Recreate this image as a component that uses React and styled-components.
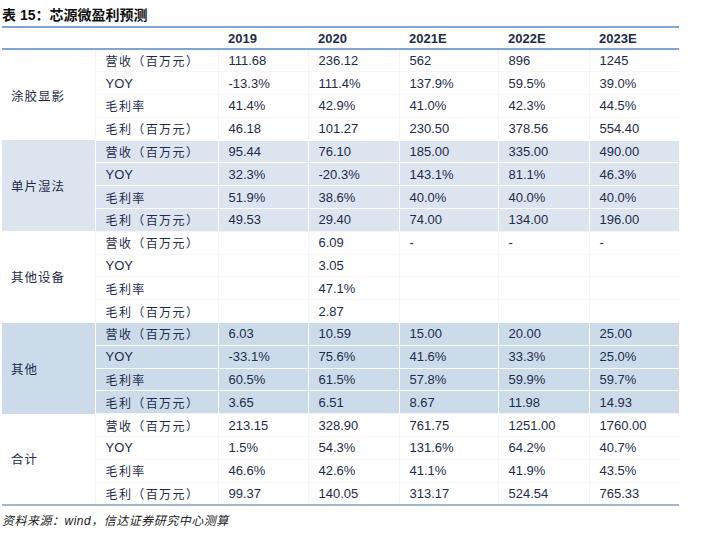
import React from "react";
import styled, { createGlobalStyle } from "styled-components";

const GlobalStyle = createGlobalStyle`
  body {
    margin: 0;
    background: #ffffff;
    font-family: "Liberation Sans", "Noto Sans CJK SC", sans-serif;
    text-spacing-trim: space-all;
  }
`;

const cols = ["2019", "2020", "2021E", "2022E", "2023E"];
const widths = [93, 123, 90, 91, 99, 91, 90];

const groups = [
  {
    name: "涂胶显影",
    shade: "",
    rows: [
      ["111.68", "236.12", "562", "896", "1245"],
      ["-13.3%", "111.4%", "137.9%", "59.5%", "39.0%"],
      ["41.4%", "42.9%", "41.0%", "42.3%", "44.5%"],
      ["46.18", "101.27", "230.50", "378.56", "554.40"],
    ],
  },
  {
    name: "单片湿法",
    shade: "#dce4f0",
    rows: [
      ["95.44", "76.10", "185.00", "335.00", "490.00"],
      ["32.3%", "-20.3%", "143.1%", "81.1%", "46.3%"],
      ["51.9%", "38.6%", "40.0%", "40.0%", "40.0%"],
      ["49.53", "29.40", "74.00", "134.00", "196.00"],
    ],
  },
  {
    name: "其他设备",
    shade: "",
    rows: [
      ["", "6.09", "-", "-", "-"],
      ["", "3.05", "", "", ""],
      ["", "47.1%", "", "", ""],
      ["", "2.87", "", "", ""],
    ],
  },
  {
    name: "其他",
    shade: "#cbdbea",
    rows: [
      ["6.03", "10.59", "15.00", "20.00", "25.00"],
      ["-33.1%", "75.6%", "41.6%", "33.3%", "25.0%"],
      ["60.5%", "61.5%", "57.8%", "59.9%", "59.7%"],
      ["3.65", "6.51", "8.67", "11.98", "14.93"],
    ],
  },
  {
    name: "合计",
    shade: "",
    rows: [
      ["213.15", "328.90", "761.75", "1251.00", "1760.00"],
      ["1.5%", "54.3%", "131.6%", "64.2%", "40.7%"],
      ["46.6%", "42.6%", "41.1%", "41.9%", "43.5%"],
      ["99.37", "140.05", "313.17", "524.54", "765.33"],
    ],
  },
];

const labels = ["营收（百万元）", "YOY", "毛利率", "毛利（百万元）"];

const Page = styled.div`
  width: 713px;
  height: 543px;
  padding: 6px 0 0 2px;
  box-sizing: border-box;
`;

const Title = styled.div`
  font-family: "Liberation Sans", "Noto Sans CJK SC", sans-serif;
  font-weight: bold;
  font-size: 14px;
  line-height: 18px;
  color: #111;
  height: 20px;
`;

const Table = styled.table`
  width: 677px;
  border-collapse: collapse;
  table-layout: fixed;
  color: #1e2b4a;
  font-size: 13px;
  border-bottom: 2px solid #a7b6cb;
`;

const Col = styled.col`
  width: ${(p) => p.$w}px;
`;

const HeadRow = styled.tr`
  height: 22px;
  border-top: 2px solid #7ea5d6;
  border-bottom: 2px solid #7ea5d6;
`;

const Th = styled.th`
  text-align: left;
  font-weight: bold;
  padding: 0 0 0 10px;
  font-size: 13px;
  color: #1e2b4a;
`;

const Row = styled.tr`
  height: 22.8px;
  background: ${(p) => p.$shade || "transparent"};
`;

const GroupCell = styled.td`
  padding: 0 0 0 9px;
  font-family: "Noto Sans CJK SC", sans-serif;
  font-size: 12.5px;
  letter-spacing: 1px;
  color: #1e2b4a;
  border-right: 1px solid ${(p) => (p.$shade ? "#ffffff" : "#f2f4f8")};
`;

const LabelCell = styled.td`
  padding: 0 0 0 10px;
  font-family: ${(p) =>
    p.$latin ? `"Liberation Sans", sans-serif` : `"Noto Sans CJK SC", sans-serif`};
  font-size: ${(p) => (p.$latin ? "13px" : "12px")};
  letter-spacing: ${(p) => (p.$latin ? "0" : "1.4px")};
  white-space: nowrap;
  border-right: 1px solid ${(p) => (p.$shade ? "#ffffff" : "#f2f4f8")};
  border-top: 1px solid ${(p) => (p.$shade ? "#ffffff" : "#f4f6f9")};
`;

const Td = styled.td`
  padding: 0 0 0 10px;
  white-space: nowrap;
  border-right: 1px solid ${(p) => (p.$shade ? "#ffffff" : "#f2f4f8")};
  border-top: 1px solid ${(p) => (p.$shade ? "#ffffff" : "#f4f6f9")};
  &:last-child {
    border-right: none;
  }
`;

const Source = styled.div`
  font-style: italic;
  font-size: 12px;
  color: #222;
  margin-top: 5px;
  letter-spacing: 0.5px;
`;

export default function App() {
  return (
    <Page>
      <GlobalStyle />
      <Title>表 15：芯源微盈利预测</Title>
      <Table>
        <colgroup>
          {widths.map((w, i) => (
            <Col key={i} $w={w} />
          ))}
        </colgroup>
        <thead>
          <HeadRow>
            <Th />
            <Th />
            {cols.map((c) => (
              <Th key={c}>{c}</Th>
            ))}
          </HeadRow>
        </thead>
        <tbody>
          {groups.map((g) =>
            g.rows.map((r, i) => (
              <Row key={g.name + i} $shade={g.shade}>
                {i === 0 && (
                  <GroupCell rowSpan={4} $shade={g.shade}>
                    {g.name}
                  </GroupCell>
                )}
                <LabelCell $shade={g.shade} $latin={labels[i] === "YOY"}>
                  {labels[i]}
                </LabelCell>
                {r.map((v, j) => (
                  <Td key={j} $shade={g.shade}>
                    {v}
                  </Td>
                ))}
              </Row>
            ))
          )}
        </tbody>
      </Table>
      <Source>资料来源：wind，信达证券研究中心测算</Source>
    </Page>
  );
}
